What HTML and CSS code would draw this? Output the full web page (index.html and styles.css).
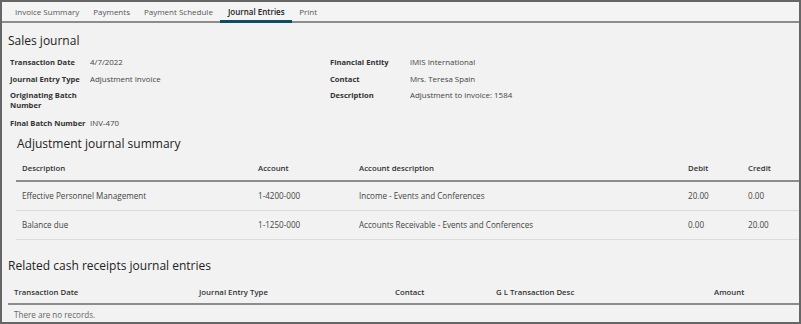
FILE: index.html
```html
<!DOCTYPE html>
<html>
<head>
<meta charset="utf-8">
<link rel="stylesheet" href="styles.css">
</head>
<body>
<div class="frame">
  <nav class="tabs">
    <span class="tab">Invoice Summary</span>
    <span class="tab">Payments</span>
    <span class="tab">Payment Schedule</span>
    <span class="tab active">Journal Entries</span>
    <span class="tab">Print</span>
  </nav>
  <main class="content">
    <h2 class="title">Sales journal</h2>
    <div class="fields">
      <div class="col">
        <div class="row"><span class="lbl">Transaction Date</span><span class="val">4/7/2022</span></div>
        <div class="row"><span class="lbl">Journal Entry Type</span><span class="val">Adjustment Invoice</span></div>
        <div class="row"><span class="lbl">Originating Batch Number</span><span class="val"></span></div>
        <div class="row"><span class="lbl">Final Batch Number</span><span class="val">INV-470</span></div>
      </div>
      <div class="col">
        <div class="row"><span class="lbl">Financial Entity</span><span class="val">iMIS International</span></div>
        <div class="row"><span class="lbl">Contact</span><span class="val">Mrs. Teresa Spain</span></div>
        <div class="row"><span class="lbl">Description</span><span class="val">Adjustment to invoice: 1584</span></div>
      </div>
    </div>
    <section class="summary">
      <h2 class="title sub">Adjustment journal summary</h2>
      <table class="grid g1">
        <thead>
          <tr><th>Description</th><th>Account</th><th>Account description</th><th>Debit</th><th>Credit</th></tr>
        </thead>
        <tbody>
          <tr><td>Effective Personnel Management</td><td>1-4200-000</td><td>Income - Events and Conferences</td><td>20.00</td><td>0.00</td></tr>
          <tr><td>Balance due</td><td>1-1250-000</td><td>Accounts Receivable - Events and Conferences</td><td>0.00</td><td>20.00</td></tr>
        </tbody>
      </table>
    </section>
    <h2 class="title rel">Related cash receipts journal entries</h2>
    <table class="grid g2">
      <thead>
        <tr><th>Transaction Date</th><th>Journal Entry Type</th><th>Contact</th><th>G L Transaction Desc</th><th>Amount</th></tr>
      </thead>
      <tbody>
        <tr><td colspan="5" class="empty">There are no records.</td></tr>
      </tbody>
    </table>
  </main>
</div>
</body>
</html>
```
FILE: styles.css
```css
html, body {
  margin: 0;
  padding: 0;
  background: #f2f2f2;
}
body {
  font-family: "Open Sans", "Noto Sans", sans-serif;
  color: #333;
}
.frame {
  width: 801px;
  height: 324px;
  box-sizing: border-box;
  border: 2px solid #666;
  overflow: hidden;
  background: #f2f2f2;
}
.tabs {
  display: flex;
  height: 19px;
  padding-left: 6px;
  border-bottom: 2px solid #8c8c8c;
  background: #f4f4f4;
}
.tab {
  padding: 0 7px;
  font-size: 8px;
  line-height: 20px;
  color: #555;
  white-space: nowrap;
}
.tab.active {
  color: #222;
  font-weight: 600;
  border-bottom: 3px solid #1d4858;
  margin-bottom: -2px;
  padding: 0 7.5px 0 8px;
}
.content {
  padding: 0 0 0 6px;
}
.title {
  margin: 0;
  font-size: 12px;
  font-weight: 500;
  color: #222;
  line-height: 16px;
}
.content > .title:first-child {
  padding-top: 10px;
}
.fields {
  display: flex;
  padding: 9px 0 0 2px;
}
.col {
  display: flex;
  flex-direction: column;
  gap: 7px;
}
.col:first-child {
  width: 320px;
}
.col:first-child .row:last-child {
  margin-top: 2px;
}
.row {
  display: flex;
  font-size: 7.6px;
  line-height: 9.5px;
}
.lbl {
  width: 80px;
  padding-right: 4px;
  box-sizing: border-box;
  font-weight: 700;
  color: #333;
}
.val {
  color: #444;
  font-size: 7.9px;
}
.summary {
  padding: 7px 0 0 8px;
}
.sub {
  padding-left: 1px;
}
.grid {
  border-collapse: collapse;
  table-layout: fixed;
  font-size: 8.1px;
  color: #444;
}
.grid th {
  text-align: left;
  font-weight: 600;
  font-size: 7.8px;
  color: #333;
  padding: 0 6px;
  border-bottom: 2px solid #8c8c8c;
}
.grid td {
  padding: 0 6px;
  border-bottom: 1px solid #dcdcdc;
}
.g1 {
  width: 786px;
  margin-top: 5px;
}
.g1 th { height: 23px; }
.g1 td { height: 28px; }
.g1 th:nth-child(1) { width: 224px; }
.g1 th:nth-child(2) { width: 89px; }
.g1 th:nth-child(3) { width: 317px; }
.g1 th:nth-child(4) { width: 48px; }
.rel {
  padding-top: 18px;
}
.g2 {
  width: 793px;
  margin-top: 8px;
}
.g2 th { height: 21px; }
.g2 th:nth-child(1) { width: 173px; }
.g2 th:nth-child(2) { width: 184px; }
.g2 th:nth-child(3) { width: 89px; }
.g2 th:nth-child(4) { width: 206px; }
.g2 td.empty {
  height: 20px;
  border-bottom: none;
  color: #666;
}
```
